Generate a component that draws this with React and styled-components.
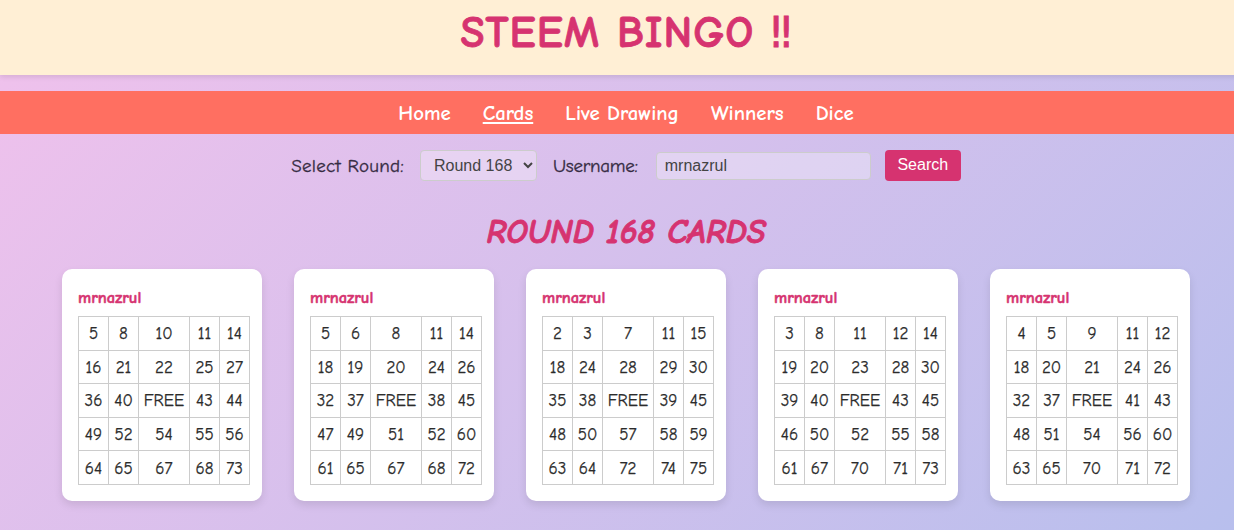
import React from 'react';
import styled, { createGlobalStyle } from 'styled-components';

const comic = `"Comic Sans MS", "Comic Neue", Lato, sans-serif`;

const GlobalStyle = createGlobalStyle`
  html, body {
    margin: 0;
    padding: 0;
  }
  body {
    min-height: 530px;
    background: linear-gradient(135deg, #f1c1ec 0%, #b8bfed 100%);
    font-family: ${comic};
    color: #333;
    overflow: hidden;
  }
`;

const Page = styled.div`
  width: 1252px;
`;

const Header = styled.header`
  height: 75px;
  background: #ffefd5;
  box-shadow: 0 2px 5px rgba(0, 0, 0, 0.1);
  display: flex;
  justify-content: center;
`;

const Title = styled.h1`
  margin: 8px 0 0;
  font-size: 44px;
  line-height: 50px;
  font-weight: 700;
  letter-spacing: 1px;
  color: #d63370;
  -webkit-text-stroke: 0.8px #d63370;
`;

const Bangs = styled.span`
  font-family: "DejaVu Sans", sans-serif;
  font-variant-emoji: text;
  font-size: 42px;
  font-weight: 400;
  letter-spacing: 0;
`;

const Nav = styled.nav`
  margin-top: 16px;
  height: 43px;
  padding-top: 1px;
  box-sizing: border-box;
  background: #ff6f61;
  display: flex;
  justify-content: center;
  align-items: center;
  gap: 32px;
`;

const NavLink = styled.a`
  color: #fff;
  font-size: 20.8px;
  font-weight: 600;
  text-decoration: ${(p) => (p.$active ? 'underline' : 'none')};
`;

const Controls = styled.form`
  margin-top: 16px;
  display: flex;
  justify-content: center;
  align-items: center;
  height: 31px;
`;

const Label = styled.label`
  font-size: 19px;
  font-weight: 500;
  letter-spacing: ${(p) => p.$spacing};
  color: #352b42;
  -webkit-text-stroke: 0.3px #352b42;
  margin-right: 16px;
`;

const RoundSelect = styled.select`
  width: 117px;
  height: 31px;
  margin-right: 16px;
  padding: 0 0 0 9px;
  box-sizing: border-box;
  font-family: "Liberation Sans", Arial, sans-serif;
  font-size: 16px;
  color: #444;
  background: rgba(255, 255, 255, 0.3);
  border: 1px solid #ccc;
  border-radius: 4px;
`;

const UserInput = styled.input`
  width: 215px;
  height: 28px;
  margin: 0 14px 0 2px;
  padding: 0 8px;
  box-sizing: border-box;
  font-family: "Liberation Sans", Arial, sans-serif;
  font-size: 16px;
  color: #444;
  background: rgba(255, 255, 255, 0.3);
  border: 1px solid #ccc;
  border-radius: 4px;
`;

const SearchButton = styled.button`
  width: 76px;
  height: 31px;
  padding: 0 0 2px;
  font-family: "Liberation Sans", Arial, sans-serif;
  font-size: 16px;
  color: #fff;
  background: #d63370;
  border: none;
  border-radius: 4px;
`;

const Heading = styled.h2`
  margin: 31px 0 0;
  text-align: center;
  font-size: 34px;
  line-height: 40px;
  font-style: italic;
  font-weight: 700;
  text-transform: uppercase;
  color: #d63370;
  -webkit-text-stroke: 0.8px #d63370;
`;

const CardRow = styled.div`
  margin-top: 17px;
  display: flex;
  justify-content: center;
  gap: 32px;
`;

const Card = styled.section`
  width: 200px;
  height: 232px;
  box-sizing: border-box;
  padding: 16px;
  background: #fff;
  border-radius: 10px;
  box-shadow: 0 4px 8px rgba(0, 0, 0, 0.1);
`;

const CardUser = styled.h3`
  margin: 4px 0 10px;
  font-size: 16.5px;
  line-height: 17px;
  font-weight: 700;
  color: #d63370;
  -webkit-text-stroke: 0.5px #d63370;
`;

const Grid = styled.table`
  width: 172px;
  height: 169px;
  table-layout: fixed;
  border-collapse: collapse;
`;

const Column = styled.col`
  width: ${(p) => (p.$wide ? '51px' : '30px')};
`;

const Cell = styled.td`
  padding: 1px 0 0;
  border: 1px solid #ccc;
  text-align: center;
  font-size: 17px;
  font-weight: 500;
  color: #2b2b2b;
  -webkit-text-stroke: 0.25px #2b2b2b;
`;

const cards = [
  [[5, 8, 10, 11, 14], [16, 21, 22, 25, 27], [36, 40, 'FREE', 43, 44], [49, 52, 54, 55, 56], [64, 65, 67, 68, 73]],
  [[5, 6, 8, 11, 14], [18, 19, 20, 24, 26], [32, 37, 'FREE', 38, 45], [47, 49, 51, 52, 60], [61, 65, 67, 68, 72]],
  [[2, 3, 7, 11, 15], [18, 24, 28, 29, 30], [35, 38, 'FREE', 39, 45], [48, 50, 57, 58, 59], [63, 64, 72, 74, 75]],
  [[3, 8, 11, 12, 14], [19, 20, 23, 28, 30], [39, 40, 'FREE', 43, 45], [46, 50, 52, 55, 58], [61, 67, 70, 71, 73]],
  [[4, 5, 9, 11, 12], [18, 20, 21, 24, 26], [32, 37, 'FREE', 41, 43], [48, 51, 54, 56, 60], [63, 65, 70, 71, 72]],
];

const links = ['Home', 'Cards', 'Live Drawing', 'Winners', 'Dice'];

const App = () => (
  <Page>
    <GlobalStyle />
    <Header>
      <Title>STEEM BINGO <Bangs>‼&#xFE0E;</Bangs></Title>
    </Header>
    <Nav>
      {links.map((link) => (
        <NavLink key={link} href="#" $active={link === 'Cards'}>{link}</NavLink>
      ))}
    </Nav>
    <Controls onSubmit={(e) => e.preventDefault()}>
      <Label htmlFor="round" $spacing="0.25px">Select Round:</Label>
      <RoundSelect id="round" defaultValue="168">
        <option value="168">Round 168</option>
      </RoundSelect>
      <Label htmlFor="username" $spacing="-0.25px">Username:</Label>
      <UserInput id="username" defaultValue="mrnazrul" />
      <SearchButton type="submit">Search</SearchButton>
    </Controls>
    <Heading>Round 168 Cards</Heading>
    <CardRow>
      {cards.map((rows, i) => (
        <Card key={i}>
          <CardUser>mrnazrul</CardUser>
          <Grid>
            <colgroup>
              {[0, 1, 2, 3, 4].map((c) => <Column key={c} $wide={c === 2} />)}
            </colgroup>
            <tbody>
              {rows.map((row, r) => (
                <tr key={r}>
                  {row.map((value, c) => <Cell key={c}>{value}</Cell>)}
                </tr>
              ))}
            </tbody>
          </Grid>
        </Card>
      ))}
    </CardRow>
  </Page>
);

export default App;
